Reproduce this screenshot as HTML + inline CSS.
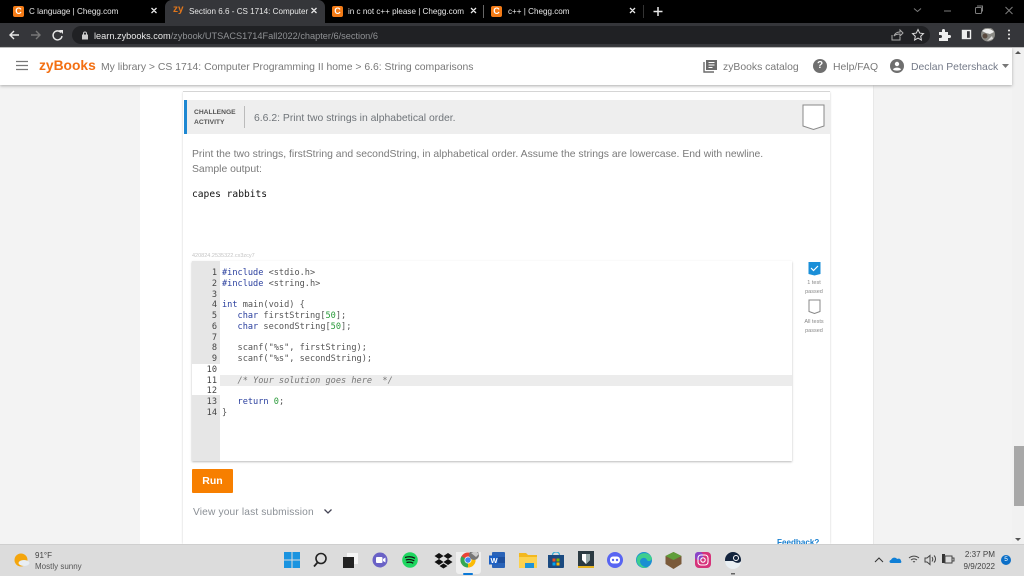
<!DOCTYPE html>
<html><head><meta charset="utf-8">
<style>
html,body{margin:0;padding:0;width:1024px;height:576px;overflow:hidden;background:#f3f3f3;font-family:"Liberation Sans",sans-serif}
div,svg{position:absolute;white-space:nowrap}
.t{color:#e8e8e8;font-size:8.1px;line-height:12px;top:6px}
.fav{width:11px;height:11px;background:#f47b16;border-radius:2px;top:6px;color:#fff;font-size:9px;font-weight:bold;line-height:11px;text-align:center}
.code{font-family:"DejaVu Sans Mono","Liberation Mono",monospace;font-size:8.6px;line-height:10.75px;color:#555;left:222px;white-space:pre}
.n{font-family:"DejaVu Sans Mono","Liberation Mono",monospace;font-size:8.6px;line-height:10.75px;color:#444;width:27px;text-align:right;left:190px}
.b{color:#2a3f9e}.num{color:#2a9a3a}
.small{font-size:5.5px;color:#888;width:40px;text-align:center;left:794px;line-height:9px}
.h{font-size:10.4px;line-height:14px;color:#797979;top:60.500px}
</style></head><body>

<!-- tab strip -->
<div style="left:0;top:0;width:1024px;height:23px;background:#000"></div>
<div style="left:165px;top:0;width:160px;height:23px;background:#35363a;border-radius:7px 7px 0 0"></div>
<div class="fav" style="left:13px">C</div>
<div class="t" style="left:29px">C language | Chegg.com</div>
<div style="left:173px;top:4px;color:#e0761c;font-size:10px;font-weight:bold;line-height:12px">zy</div>
<div class="t" style="left:189px">Section 6.6 - CS 1714: Computer</div>
<div class="fav" style="left:332px">C</div>
<div class="t" style="left:348px">in c not c++ please | Chegg.com</div>
<div style="left:483px;top:5px;width:1px;height:13px;background:#666"></div>
<div class="fav" style="left:491px">C</div>
<div class="t" style="left:508px">c++ | Chegg.com</div>
<div style="left:643px;top:5px;width:1px;height:13px;background:#333"></div>
<svg style="left:0;top:0" width="700" height="23" fill="none" stroke="#e8e8e8" stroke-width="1.300"><path d="M151.500 8l5 5M156.500 8l-5 5M311.500 8l5 5M316.500 8l-5 5M471 8l5 5M476 8l-5 5M630 8l5 5M635 8l-5 5"/><path d="M658 7v9M653.500 11.500h9" stroke-width="1.500"/></svg>
<svg style="left:910px;top:0" width="114" height="23" fill="none" stroke="#7c7c7c" stroke-width="1"><path d="M4 8.500l3.500 3 3.500-3"/><path d="M34 11h7"/><rect x="65.500" y="7.500" width="6" height="6" rx="1"/><path d="M67 6h5.500v5.500"/><path d="M95.500 7l7 7M102.500 7l-7 7"/></svg>

<!-- toolbar -->
<div style="left:0;top:23px;width:1024px;height:24px;background:#35363a"></div>
<div style="left:72px;top:26px;width:858px;height:18px;background:#202124;border-radius:9px"></div>
<svg style="left:8px;top:28px" width="60" height="14" fill="none" stroke-width="1.400"><path stroke="#e8e8e8" d="M11 7H2M6 3L2 7l4 4"/><path stroke="#777" d="M23 7h9M28 3l4 4-4 4"/><path stroke="#e8e8e8" d="M53 4.500A4.500 4.500 0 1 0 54 8"/><path fill="#e8e8e8" stroke="none" d="M51 2h4v4z"/></svg>
<svg style="left:81px;top:31px" width="8" height="9"><rect x="1" y="3.500" width="6" height="5" fill="#ccc"/><path d="M2.500 4V2.500a1.500 1.500 0 0 1 3 0V4" fill="none" stroke="#ccc"/></svg>
<div style="left:94px;top:30px;font-size:9.2px;line-height:12px;color:#e8e8e8">learn.zybooks.com<span style="color:#8f9194">/zybook/UTSACS1714Fall2022/chapter/6/section/6</span></div>
<svg style="left:890px;top:28px" width="134" height="14" fill="none"><path stroke="#aaa" d="M2 7v5h8V9M4 8c1-3 3-4 6-4V2l3 3-3 3V6c-3 0-5 1-6 2z"/><path stroke="#ddd" d="M26 1.500l1.700 3.600 3.800.5-2.800 2.600.7 3.800-3.400-1.900-3.400 1.900.7-3.800-2.800-2.600 3.800-.5z" transform="translate(2 0)"/><path fill="#eee" d="M50 4h3V2.500a1.500 1.500 0 0 1 3 0V4h3v3h1.500a1.500 1.500 0 0 1 0 3H59v3h-9v-3h1.500a1.500 1.500 0 0 0 0-3H50z" transform="translate(-1 0)"/><rect x="72.500" y="2.500" width="8" height="8" stroke="#eee" stroke-width="1.400"/><rect x="72" y="2" width="5" height="9" fill="#eee"/><circle cx="98" cy="6.500" r="7" fill="#8a8a85"/><path d="M92 3c3-3 9-3 12 1l-4 2-4-1z" fill="#eee"/><path d="M97 13l5-5 1 3z" fill="#ddd"/><circle cx="95" cy="8" r="2.500" fill="#5a4a40"/><circle cx="119" cy="2.500" r="1" fill="#eee"/><circle cx="119" cy="6.500" r="1" fill="#eee"/><circle cx="119" cy="10.500" r="1" fill="#eee"/></svg>
<div style="left:0;top:47px;width:1024px;height:1px;background:#bdbdbd"></div>

<!-- page -->
<div style="left:0;top:48px;width:1012px;height:496px;background:#f3f3f3"></div>
<div style="left:140px;top:48px;width:733px;height:496px;background:#fff"></div>
<div style="left:873px;top:48px;width:1px;height:496px;background:#e8e8e8"></div>
<div style="left:1012px;top:48px;width:12px;height:496px;background:#f1f1f1"></div>
<div style="left:1014px;top:446px;width:10px;height:60px;background:#a8a8a8"></div>
<svg style="left:1014px;top:50px" width="8" height="6"><path d="M4 1l3 3H1z" fill="#555"/></svg>
<svg style="left:1014px;top:536px" width="8" height="6"><path d="M4 5l3-3H1z" fill="#555"/></svg>

<!-- card -->
<div style="left:183px;top:92px;width:647px;height:452px;background:#fff;box-shadow:0 0 2px #ccc"></div>
<div style="left:183px;top:85px;width:647px;height:6px;background:#fff;border-bottom:1px solid #d5d5d5"></div>
<div style="left:184px;top:100px;width:647px;height:34px;background:#eeeeee"></div>
<div style="left:184px;top:100px;width:3px;height:34px;background:#1e88d2"></div>
<div style="left:194px;top:108px;font-size:6.7px;font-weight:bold;line-height:10px;color:#555">CHALLENGE<br>ACTIVITY</div>
<div style="left:244px;top:106px;width:1px;height:22px;background:#bbb"></div>
<div style="left:254px;top:112px;font-size:10.4px;line-height:14px;color:#6f7479">6.6.2: Print two strings in alphabetical order.</div>
<svg style="left:802px;top:104px" width="24" height="27" fill="#fff" stroke="#888"><path d="M1 1h21v21l-10.500 3.500L1 22z"/></svg>
<div style="left:192px;top:147px;font-size:10.4px;line-height:15px;color:#7a7a7a">Print the two strings, firstString and secondString, in alphabetical order. Assume the strings are lowercase. End with newline.<br>Sample output:</div>
<div style="left:192px;top:188.500px;font-family:'DejaVu Sans Mono','Liberation Mono',monospace;font-size:9.600px;line-height:12px;color:#111">capes rabbits</div>
<div style="left:192px;top:252px;font-size:5.500px;line-height:8px;color:#c4c4c4">420824.2535322.cx3zcy7</div>

<!-- editor -->
<div style="left:192px;top:261px;width:600px;height:200px;background:#fff;box-shadow:0 1px 2px #bbb"></div>
<div style="left:192px;top:261px;width:28px;height:200px;background:#e6e6e6"></div>
<div style="left:192px;top:364px;width:28px;height:31px;background:#fff"></div>
<div style="left:220px;top:374.500px;width:572px;height:11px;background:#ececec"></div>
<div class="n" style="top:268px">1<br>2<br>3<br>4<br>5<br>6<br>7<br>8<br>9<br>10<br>11<br>12<br>13<br>14</div>
<div class="code" style="top:268px"><span class="b">#include</span> &lt;stdio.h&gt;
<span class="b">#include</span> &lt;string.h&gt;

<span class="b">int</span> main(void) {
   <span class="b">char</span> firstString[<span class="num">50</span>];
   <span class="b">char</span> secondString[<span class="num">50</span>];

   scanf("%s", firstString);
   scanf("%s", secondString);

   <i style="color:#777">/* Your solution goes here  */</i>

   <span class="b">return</span> <span class="num">0</span>;
}</div>

<!-- side badges -->
<svg style="left:807px;top:261px" width="14" height="15"><path d="M1.500 1h12v12l-6 1.500-6-1.500z" fill="#1a8fd8"/><path d="M4 7l2.500 2.500L11 5" stroke="#fff" fill="none" stroke-width="1.200"/></svg>
<div class="small" style="top:279px">1 test<br>passed</div>
<svg style="left:807px;top:299px" width="14" height="15"><path d="M2 1h11v11.500l-5.500 2-5.500-2z" fill="#fff" stroke="#888"/></svg>
<div class="small" style="top:318px">All tests<br>passed</div>

<!-- run -->
<div style="left:192px;top:469px;width:41px;height:24px;background:#f77f00;border-radius:1px;color:#fff;font-size:10.500px;font-weight:bold;text-align:center;line-height:25px">Run</div>
<div style="left:193px;top:505.500px;font-size:10.200px;line-height:14px;color:#8b9096;letter-spacing:.15px">View your last submission</div>
<svg style="left:323px;top:508px" width="10" height="8" fill="none" stroke="#445" stroke-width="1.300"><path d="M1.500 1.500L5 5l3.500-3.500"/></svg>
<div style="left:777px;top:537px;font-size:8.100px;line-height:11px;color:#1a80d0;font-weight:bold;height:7px;overflow:hidden">Feedback?</div>

<!-- header -->
<div style="left:0;top:48px;width:1012px;height:37px;background:#fff;box-shadow:0 1px 3px #aaa"></div>
<svg style="left:16px;top:60px" width="13" height="11" stroke="#777" stroke-width="1.200"><path d="M0 1.500h12M0 5.500h12M0 9.500h12"/></svg>
<div style="left:39px;top:57px;font-size:13.800px;line-height:17px;font-weight:bold;color:#f36f12">zyBooks</div>
<div class="h" style="left:101px">My library &gt; CS 1714: Computer Programming II home &gt; 6.6: String comparisons</div>
<svg style="left:703px;top:59px" width="15" height="14"><path d="M1 3v10h10" fill="none" stroke="#6b6b6b" stroke-width="1.400"/><rect x="3" y="1" width="11" height="10" fill="#6b6b6b"/><path d="M5.500 3.500h6M5.500 6h6M5.500 8.500h4" stroke="#fff"/></svg>
<div class="h" style="left:723px">zyBooks catalog</div>
<div style="left:813px;top:59px;width:14px;height:14px;border-radius:50%;background:#6f6f6f;color:#fff;font-size:10px;font-weight:bold;line-height:14px;text-align:center">?</div>
<div class="h" style="left:833px">Help/FAQ</div>
<svg style="left:890px;top:59px" width="14" height="14"><circle cx="7" cy="7" r="7" fill="#6f6f6f"/><circle cx="7" cy="5" r="2.200" fill="#fff"/><path d="M3 10.500c1-2.500 7-2.500 8 0-1.500 1.500-6.500 1.500-8 0z" fill="#fff"/></svg>
<div class="h" style="left:911px;color:#747a88">Declan Petershack</div>
<svg style="left:1002px;top:64px" width="7" height="5"><path d="M0 0h7L3.500 4z" fill="#777"/></svg>

<!-- taskbar -->
<div style="left:0;top:544px;width:1024px;height:32px;background:#dcdcdc;border-top:1px solid #cfcfcf;box-sizing:border-box"></div>
<svg style="left:14px;top:552px" width="16" height="16"><circle cx="7" cy="8" r="6.500" fill="#f4a50c"/><ellipse cx="10" cy="11" rx="5.500" ry="3" fill="#e8eef4"/></svg>
<div style="left:35px;top:550px;font-size:8px;line-height:11px;color:#444">91°F<br><span style="color:#555">Mostly sunny</span></div>

<svg style="left:284px;top:552px" width="300" height="24">
 <g fill="#1a94e0"><rect x="0" y="0" width="7.500" height="7.500"/><rect x="8.500" y="0" width="7.500" height="7.500"/><rect x="0" y="8.500" width="7.500" height="7.500"/><rect x="8.500" y="8.500" width="7.500" height="7.500"/></g>
 <circle cx="37" cy="6.500" r="5" fill="none" stroke="#222" stroke-width="1.600"/><path d="M33.500 10.500L30 14.500" stroke="#222" stroke-width="1.800"/>
 <rect x="63" y="1" width="11" height="11" fill="#f5f5f5"/><rect x="59" y="5" width="11" height="11" fill="#222"/>
 <circle cx="96" cy="8" r="7.500" fill="#6a62c6"/><rect x="92" y="5" width="6.500" height="6" rx="1" fill="#fff"/><path d="M99 7l2.500-1.500v5L99 9z" fill="#fff"/>
 <circle cx="126" cy="8" r="7.800" fill="#1ed760"/><path d="M121 5.500c3-1 7-1 10 .8M121.800 8c3-.8 6-.5 8.500.8M122.500 10.500c2-.5 5-.4 6.800.7" fill="none" stroke="#111" stroke-width="1.200"/>
 <path d="M155 1l4.500 3-4.500 3-4.500-3zM164 1l4.500 3-4.500 3-4.500-3zM155 7l4.500 3-4.500 3-4.500-3zM164 7l4.500 3-4.500 3-4.500-3zM159.500 11.500l4 2.500-4 2.500-4-2.500z" fill="#111"/>
 <rect x="172" y="-4" width="25" height="26" rx="3" fill="#efefef"/>
 <circle cx="184" cy="8" r="7.500" fill="#ea4335"/><path d="M184 8L177.500 4.200A7.500 7.500 0 0 0 184 15.500z" fill="#34a853"/><path d="M184 8l6.500-3.800A7.500 7.500 0 0 1 184 15.500z" fill="#fbbc05"/><circle cx="184" cy="8" r="3.500" fill="#fff"/><circle cx="184" cy="8" r="2.800" fill="#4285f4"/>
 <circle cx="190" cy="3" r="5" fill="#777"/><path d="M187 1l5-2 3 3-3 3z" fill="#ccc"/>
 <rect x="179" y="21" width="10" height="2" rx="1" fill="#0a78d7"/>
 <rect x="208" y="0" width="13" height="16" rx="1" fill="#2a63b8"/><rect x="208" y="5" width="13" height="6" fill="#1d4f9e"/><rect x="205" y="3.500" width="9" height="9" fill="#1a5fc4"/><text x="206.500" y="11" font-family="Liberation Sans" font-size="7.500" font-weight="bold" fill="#fff">W</text>
 <path d="M235 1h7l2 2h9v13h-18z" fill="#f3b81f"/><rect x="235" y="5" width="18" height="11" fill="#fcd24f"/><rect x="241" y="11" width="9" height="5" fill="#1e93d8"/>
 <path d="M264 3h16v12a1 1 0 0 1-1 1h-14a1 1 0 0 1-1-1z" fill="#1b4a80"/><path d="M268.500 3c0-4 7-4 7 0" fill="none" stroke="#3bb0d8" stroke-width="1.300"/><rect x="268.500" y="6.500" width="3" height="3" fill="#f25022"/><rect x="272.500" y="6.500" width="3" height="3" fill="#7fba00"/><rect x="268.500" y="10.500" width="3" height="3" fill="#00a4ef"/><rect x="272.500" y="10.500" width="3" height="3" fill="#ffb900"/>
</svg>
<svg style="left:570px;top:550px" width="190" height="26">
 <rect x="8" y="1" width="16" height="15" fill="#2b3a42"/><rect x="8" y="16" width="16" height="2" fill="#e6b422"/><path d="M12 4h8v6l-4 4-4-4z" fill="#fff"/><path d="M16 4h4v6l-4 4z" fill="#9aa"/>
 <circle cx="45" cy="10" r="8" fill="#5865f2"/><rect x="40" y="6.500" width="10" height="7" rx="3" fill="#fff"/><circle cx="43" cy="10" r="1.200" fill="#5865f2"/><circle cx="47" cy="10" r="1.200" fill="#5865f2"/>
 <circle cx="74" cy="10" r="8" fill="#1b8fd2"/><path d="M67 8c2-6 12-7 15 0 0 3-4 4-5 2-1-3-6-3-7 1 0 4 4 7 9 6-6 3-14-2-12-9z" fill="#3ecf8e"/>
 <path d="M103.500 2l8 4v8l-8 5-8-5V6z" fill="#7a5a3a"/><path d="M103.500 2l8 4-8 4-8-4z" fill="#5f9e3a"/>
 <rect x="125" y="2" width="16" height="16" rx="4" fill="#d6337a"/><rect x="125" y="2" width="8" height="8" rx="3" fill="#8a45c8"/><rect x="128" y="5" width="10" height="10" rx="3" fill="none" stroke="#fff" stroke-width="1.100"/><circle cx="133" cy="10" r="2.200" fill="none" stroke="#fff" stroke-width="1.100"/>
 <circle cx="163" cy="10" r="8" fill="#13243d"/><path d="M155 11a8 8 0 0 0 16 0c-2 3-5 2-8 0z" fill="#e8eef2"/><circle cx="166" cy="8" r="2.500" fill="none" stroke="#fff"/>
 <rect x="161" y="23" width="4" height="1.500" fill="#666"/>
</svg>

<!-- tray -->
<svg style="left:874px;top:552px" width="120" height="16" fill="none">
 <path d="M1 10l4-4 4 4" stroke="#333"/>
 <path d="M17 11c-2 0-2-3 0-3 1-3 5-3 6-1 2-1 4 0 4 2 1 1 0 2-1 2z" fill="#0f7fd6"/>
 <path d="M35 6c3-2.500 7-2.500 10 0M37 8c2-1.500 4-1.500 6 0M39 10c.6-.5 1.400-.5 2 0" stroke="#444"/>
 <path d="M51 6h2l3-2.500v9L53 10h-2zM58 5c1 1.500 1 3 0 4.500M60 3.500c2 2 2 5 0 7" stroke="#444"/>
 <rect x="68" y="2" width="3" height="9" fill="#333"/><rect x="71" y="4" width="7" height="7" stroke="#444"/><path d="M78 6h2v3h-2" stroke="#444"/>
</svg>
<div style="left:945px;top:549px;width:50px;font-size:8.100px;line-height:11.500px;color:#444;text-align:right">2:37 PM<br>9/9/2022</div>
<div style="left:1001px;top:555px;width:10px;height:10px;border-radius:50%;background:#0a6fc8;color:#fff;font-size:6.500px;line-height:10px;text-align:center">5</div>
</body></html>
